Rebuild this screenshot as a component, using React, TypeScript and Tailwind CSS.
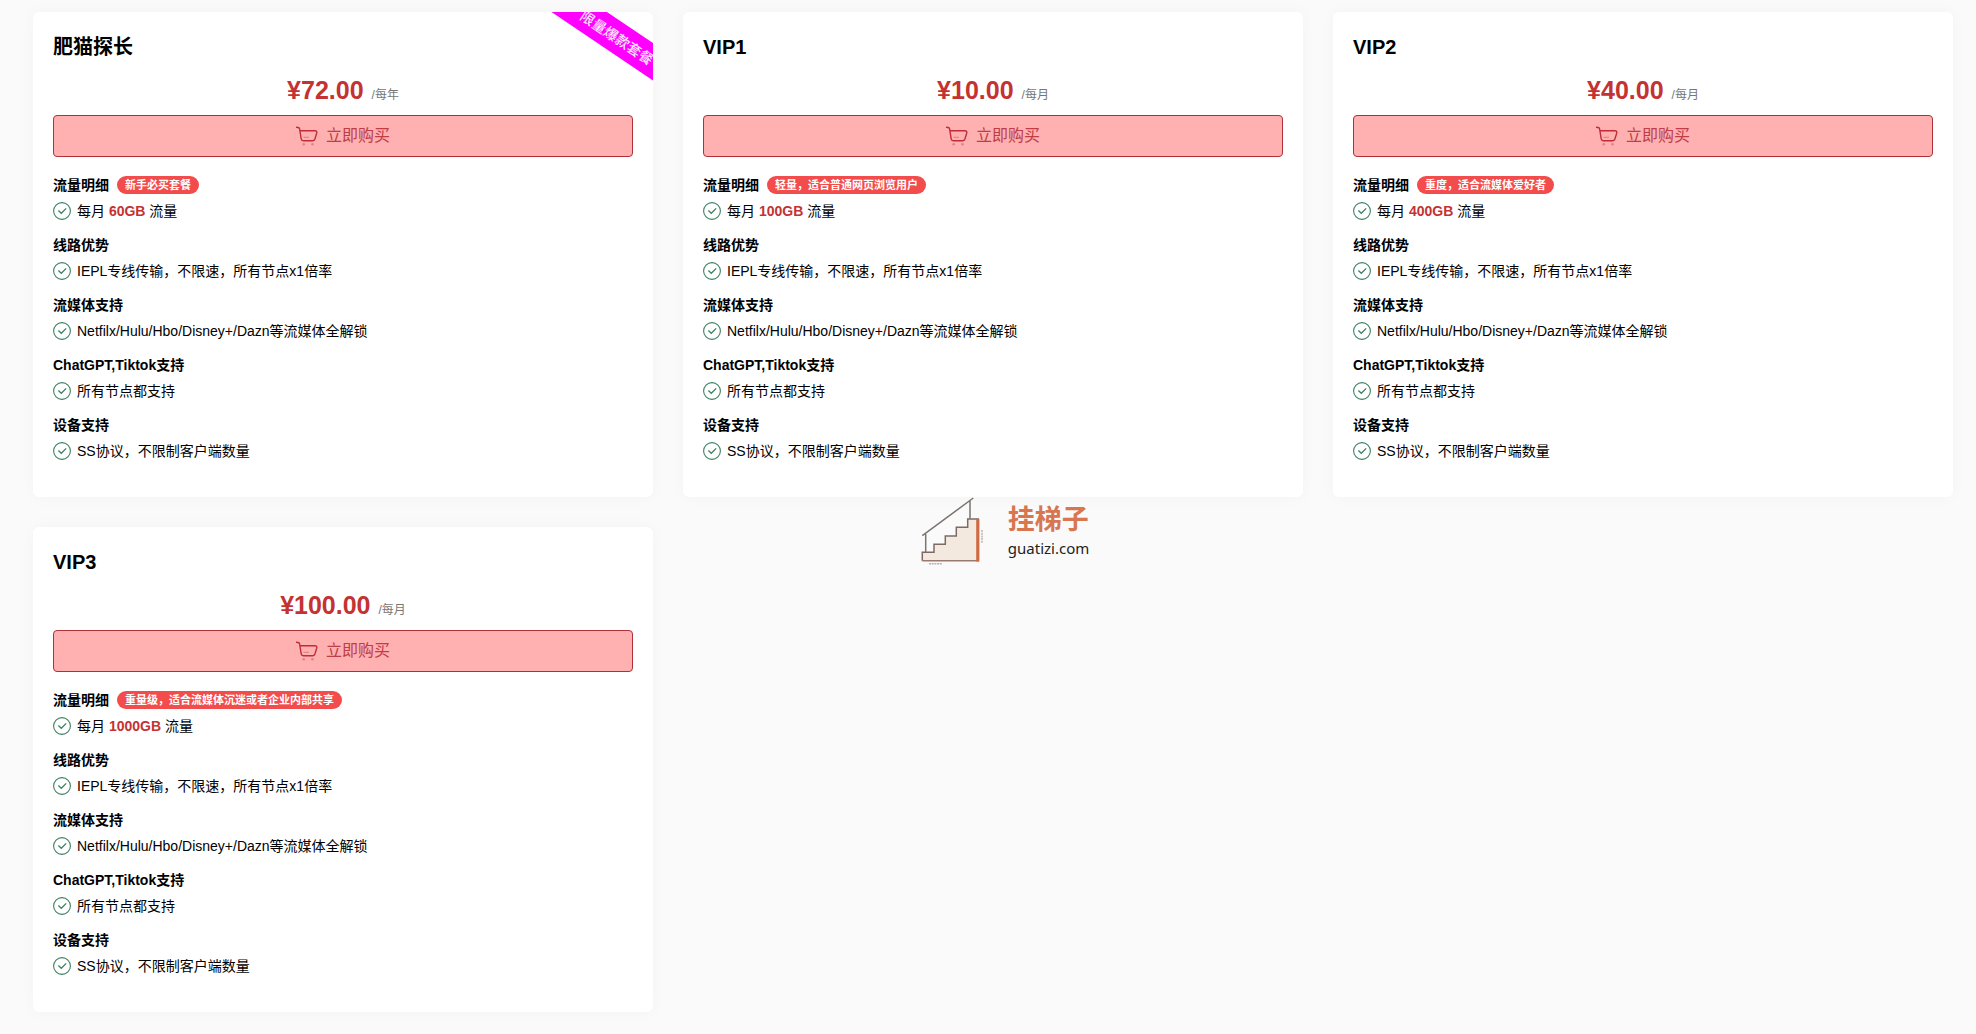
import { Fragment } from "react";

type Plan = {
  name: string;
  price: string;
  period: string;
  tag: string;
  traffic: string;
  ribbon?: string;
};

const plans: Plan[] = [
  { name: "肥猫探长", price: "¥72.00", period: "/每年", tag: "新手必买套餐", traffic: "60GB", ribbon: "限量爆款套餐" },
  { name: "VIP1", price: "¥10.00", period: "/每月", tag: "轻量，适合普通网页浏览用户", traffic: "100GB" },
  { name: "VIP2", price: "¥40.00", period: "/每月", tag: "重度，适合流媒体爱好者", traffic: "400GB" },
  { name: "VIP3", price: "¥100.00", period: "/每月", tag: "重量级，适合流媒体沉迷或者企业内部共享", traffic: "1000GB" },
];

const features = [
  { title: "线路优势", text: "IEPL专线传输，不限速，所有节点x1倍率" },
  { title: "流媒体支持", text: "Netfilx/Hulu/Hbo/Disney+/Dazn等流媒体全解锁" },
  { title: "ChatGPT,Tiktok支持", text: "所有节点都支持" },
  { title: "设备支持", text: "SS协议，不限制客户端数量" },
];

const CheckIcon = () => (
  <svg className="size-[18px] shrink-0" viewBox="0 0 18 18" fill="none" stroke="#3d8063" aria-hidden="true">
    <circle cx="9" cy="9" r="8.4" strokeWidth="1.1" />
    <path d="M5.4 8.6 8.3 11.3 13.2 6.4" strokeWidth="1.3" />
  </svg>
);

const CartIcon = () => (
  <svg className="h-5 w-[22px] shrink-0" viewBox="0 0 22 20" fill="none" aria-hidden="true">
    <path
      d="M.6 1.2 2.9 1.7Q3.5 2 3.6 3L5.2 12.8Q5.5 14.7 7.3 14.7H16.5Q18.3 14.7 18.9 13L20.7 7.2Q21.2 4.9 19 4.8H4"
      stroke="#c02c38"
      strokeWidth="1.4"
      strokeLinejoin="round"
      strokeLinecap="round"
    />
    <path d="M7.5 11.3H13" stroke="#dd7d80" strokeWidth="1" />
    <circle cx="7.7" cy="18.3" r="1.3" fill="#dd8487" />
    <circle cx="16.5" cy="18.3" r="1.3" fill="#dd8487" />
  </svg>
);

const PlanCard = ({ plan }: { plan: Plan }) => (
  <section className="relative overflow-hidden rounded-md bg-white px-5 pt-5 pb-9 shadow-[0_0_16px_rgba(0,0,0,0.03)]">
    {plan.ribbon && (
      <div className="absolute top-2.5 -right-11 h-[31px] w-40 rotate-34 bg-[#ff00ff] text-center text-sm leading-8 font-medium text-[#ffe6ff]">
        {plan.ribbon}
      </div>
    )}

    <h2 className="text-xl leading-[30px] font-bold">{plan.name}</h2>

    <p className="mt-3 flex h-8 items-baseline justify-center gap-2 leading-8 text-[#c43232]">
      <span className="text-[25px] font-bold">{plan.price}</span>
      <span className="text-xs text-[#777777]">{plan.period}</span>
    </p>

    <button
      type="button"
      className="mt-[9px] flex h-[42px] w-full items-center justify-center gap-2 rounded border border-[#b03038] bg-[#ffb0b0] text-base text-[#c03c46]"
    >
      <CartIcon />
      立即购买
    </button>

    <dl className="mt-[18px] text-sm">
      <dt className="flex h-5 items-center font-bold">
        流量明细
        <span className="ml-2 rounded-full bg-[#f24c4c] px-2 text-[11px] leading-[18px] text-white">{plan.tag}</span>
      </dt>
      <dd className="mt-1.5 flex h-5 items-center gap-1.5">
        <CheckIcon />
        <span>
          每月 <b className="text-[#c43232]">{plan.traffic}</b> 流量
        </span>
      </dd>
      {features.map((item) => (
        <Fragment key={item.title}>
          <dt className="mt-3.5 h-5 leading-5 font-bold">{item.title}</dt>
          <dd className="mt-1.5 flex h-5 items-center gap-1.5">
            <CheckIcon />
            <span>{item.text}</span>
          </dd>
        </Fragment>
      ))}
    </dl>
  </section>
);

const SiteLogo = () => (
  <div className="absolute top-[496px] left-[46.5%] flex items-start gap-6">
    <svg className="h-[70px] w-[65px]" viewBox="0 0 65 70" fill="none" aria-hidden="true">
      <path d="M3.3 64.7V56.3H15V48.3H26.3V40H37.3V31.3H48.7V23H60V64.7Z" fill="#f4e9df" />
      <path d="M3.3 64.7V56.3H15V48.3H26.3V40H37.3V31.3H48.7V23H60" stroke="#7d6a66" strokeWidth="1.5" />
      <path d="M3.3 64.7H60" stroke="#9a7a70" strokeWidth="1.5" />
      <path d="M58.8 23V65.5" stroke="#cf6a42" strokeWidth="3.2" />
      <path d="M3.3 39.7 54.3 2M6.7 38V56M51 5V23" stroke="#7d7370" strokeWidth="1.5" />
      <path d="M10 67.7H23M63 34V47" stroke="#b9b0ad" strokeWidth="1.4" strokeDasharray="2 .7" />
    </svg>
    <div className="pt-1.5">
      <p className="font-['Noto_Sans_CJK_SC',sans-serif] text-[27px] leading-8 font-bold text-[#d8764f]">挂梯子</p>
      <p className="mt-0.5 font-['Noto_Sans',sans-serif] text-[15px] leading-6 text-[#222222]">guatizi.com</p>
    </div>
  </div>
);

export default function App() {
  return (
    <main className="relative min-h-screen bg-[#fafafa] pt-3 pr-[23px] pb-6 pl-[33px] font-['Liberation_Sans','Noto_Sans_CJK_SC',sans-serif] text-black">
      <div className="grid grid-cols-1 gap-[30px] md:grid-cols-2 lg:grid-cols-3">
        {plans.map((plan) => (
          <PlanCard key={plan.name} plan={plan} />
        ))}
      </div>
      <SiteLogo />
    </main>
  );
}
